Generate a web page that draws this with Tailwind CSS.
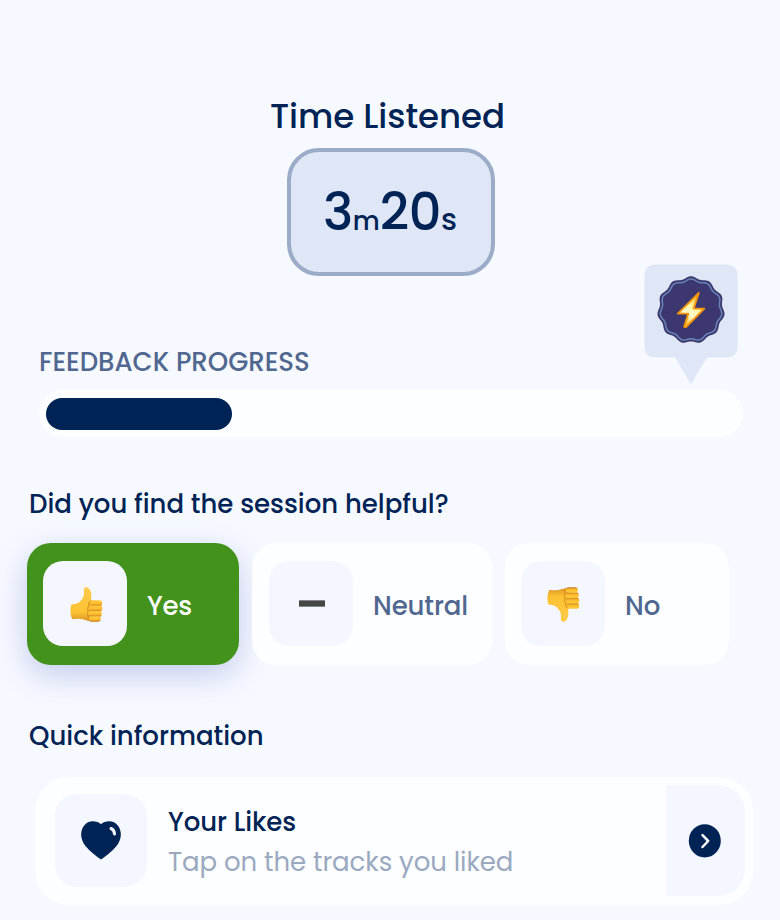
<!DOCTYPE html>
<html lang="en">
<head>
<meta charset="utf-8">
<title>Session feedback</title>
<script src="https://cdn.jsdelivr.net/npm/@tailwindcss/browser@4"></script>
</head>
<body class="bg-[#f6f9ff]">
<main class="relative w-[780px] h-[920px] overflow-hidden bg-[#f6f9ff] font-[Poppins,Inter,sans-serif] font-medium text-[#002355] whitespace-nowrap">
  <header class="flex flex-col items-center pt-[96px]">
    <h1 class="h-[40px] leading-[40px] text-[34px] mr-[5px]">Time Listened</h1>
    <div class="mt-[12px] ml-[2px] w-[208px] h-[128px] rounded-[32px] border-4 border-[#9bacc8] bg-[#dfe6f5] flex items-baseline justify-center pt-[30px] pr-[2px] leading-[60px] text-[51px]">
      <span class="tracking-[-0.5px]">3</span><span class="text-[26px]">m</span><span class="tracking-[-0.5px]">20</span><span class="text-[30px]">s</span>
    </div>
  </header>

  <section class="pt-[70px] pl-[39px]">
    <h2 class="h-[32px] leading-[32px] text-[26px] text-[#50678f]">FEEDBACK PROGRESS</h2>
    <div class="mt-[12px] w-[704px] h-[47px] rounded-full bg-[#fdfeff] pt-[8px] pl-[7px]">
      <div class="w-[186px] h-[32px] rounded-full bg-[#002355]"></div>
    </div>
  </section>

  <div class="absolute left-[644px] top-[264px] w-[94px] h-[121px]">
    <svg class="block" width="94" height="121" viewBox="0 0 94 121">
      <defs>
        <linearGradient id="bolt" x1="0.7" y1="0" x2="0.3" y2="1"><stop offset="0" stop-color="#ffae12"/><stop offset=".38" stop-color="#fff3a0"/><stop offset=".65" stop-color="#fffbd0"/><stop offset="1" stop-color="#ffb010"/></linearGradient>
      </defs>
      <path d="M12 .5H82Q93.500 .5 93.500 12V82Q93.500 93.500 82 93.500H63L47 120 31 93.500H12Q.5 93.500 .5 82V12Q.5 .5 12 .5Z" fill="#dfe6f5"/>
      <path id="seal" fill="#3c376f"/>
      <path id="ring" fill="none" stroke="#6681b3" stroke-width="1.600"/>
      <path d="M54.800 28.500 33.800 49.300H44.300L40.200 62.500 42 62.700 60.300 44.300H49.600Z" transform="translate(0 .3)" fill="url(#bolt)" stroke="#f8960a" stroke-width="1.900" stroke-linejoin="round"/>
    </svg>
  </div>

  <section class="pt-[50px] pl-[27px]">
    <h2 class="h-[34px] leading-[34px] pl-[2px] text-[26px]">Did you find the session helpful?</h2>
    <div class="mt-[22px] flex gap-[13px] text-[26px] text-[#50678f]">
      <div class="w-[212px] h-[121.500px] rounded-[24px] bg-[#42921b] text-white flex items-start pt-[18px] pl-[16px] gap-[20px] shadow-[0_10px_32px_rgba(70,85,190,0.28)]">
        <div class="w-[84px] h-[85px] rounded-[20px] bg-[#f4f7ff] flex items-center justify-center">
          <svg class="ml-[3px] mt-[2px]" width="36" height="36" viewBox="0 0 36 36"><use href="#thumb"/></svg>
        </div><span class="leading-[91px] tracking-[-0.2px]">Yes</span>
      </div>
      <div class="w-[240px] h-[121.500px] rounded-[24px] bg-[#fdfeff] flex items-start pt-[18px] pl-[17px] gap-[20px]">
        <div class="w-[84px] h-[85px] rounded-[20px] bg-[#f4f7ff] flex items-center justify-center">
          <div class="w-[26px] h-[7px] ml-[1px] bg-[#454545] border-y border-[#85868a]"></div>
        </div><span class="leading-[91px] tracking-[-0.1px]">Neutral</span>
      </div>
      <div class="w-[224px] h-[121.500px] rounded-[24px] bg-[#fdfeff] flex items-start pt-[18px] pl-[16px] gap-[20px]">
        <div class="w-[84px] h-[85px] rounded-[20px] bg-[#f4f7ff] flex items-center justify-center">
          <svg class="ml-[2px]" width="36" height="36" viewBox="0 0 36 36"><use href="#thumb" transform="translate(0 36) scale(1 -1)"/></svg>
        </div><span class="leading-[91px]">No</span>
      </div>
    </div>
  </section>

  <section class="pt-[54.500px] pl-[29px]">
    <h2 class="h-[34px] leading-[34px] text-[26px]">Quick information</h2>
    <div class="mt-[24px] ml-[6px] w-[718px] h-[128px] rounded-[34px] bg-[#fdfeff] flex items-start pl-[20px] pr-[8.500px]">
      <div class="mt-[17px] w-[92px] h-[93px] rounded-[22px] bg-[#f4f7ff] flex items-center justify-center">
        <svg width="42" height="42" viewBox="0 0 42 42"><path d="M21 4.200C26 .2 34 .2 38 5.800 42.800 12.500 41 20.500 36.500 26 32 31.500 26 36 21 39.500 16 36 10 31.500 5.500 26 1 20.500 -.8 12.500 4 5.800 8 .2 16 .2 21 4.200Z" fill="#002355"/><path d="M31 8.500Q34.300 9.700 34.500 14" fill="none" stroke="#f4f7ff" stroke-width="3" stroke-linecap="round"/></svg>
      </div>
      <div class="mt-[25px] ml-[21px] flex-1 text-[26px] leading-[40px]">
        <div class="tracking-[-0.05px]">Your Likes</div>
        <div class="font-normal text-[#9ba9c0] tracking-[-0.05px]">Tap on the tracks you liked</div>
      </div>
      <div class="mt-[8px] w-[79px] h-[111px] rounded-r-[27px] bg-[#f4f7ff] flex items-center justify-center">
        <svg width="34" height="34" viewBox="0 0 34 34"><ellipse cx="16.800" cy="16.800" rx="16" ry="16.600" fill="#002355"/><path d="M14.500 11.200 20.200 17 14.500 23" fill="none" stroke="#f8faff" stroke-width="2.500" stroke-linecap="round" stroke-linejoin="round"/></svg>
      </div>
    </div>
  </section>

  <svg class="absolute" width="0" height="0">
    <defs>
      <linearGradient id="skin" x1="0" y1="0" x2="0" y2="1"><stop offset="0" stop-color="#ffcb4a"/><stop offset=".75" stop-color="#fdc232"/><stop offset="1" stop-color="#dc9426"/></linearGradient>
      <linearGradient id="finger" x1="0" y1="0" x2="0" y2="1"><stop offset="0" stop-color="#ffcb3c"/><stop offset=".6" stop-color="#fcba2c"/><stop offset="1" stop-color="#c4761c"/></linearGradient>
      <g id="thumb">
        <path d="M2.500 17.500C5 17.300 8.500 17 11 14.500 14 11.500 15 9 15 5.500 14 1.500 16 -.3 18 .3 21 1.200 22.500 5.500 22.300 9 22.300 11 22.300 12.500 22 14H27V33.500Q20 34.400 16 33 10 31 4 32.300C1 30.500 .8 20 2.500 17.500Z" fill="url(#skin)"/>
        <rect x="20" y="13.200" width="13.200" height="5.900" rx="2.900" fill="url(#finger)"/>
        <rect x="19.300" y="18.600" width="14" height="5.900" rx="2.900" fill="url(#finger)"/>
        <rect x="19.300" y="24" width="13.500" height="5.700" rx="2.800" fill="url(#finger)"/>
        <rect x="19.600" y="29.300" width="12.200" height="5.400" rx="2.600" fill="url(#finger)"/>
        <path d="M21.800 13.500Q18.800 15.500 19.600 19 18 21 19 24 18 27 19.200 29.500 18.500 31.500 20 33.500" fill="none" stroke="#d0851c" stroke-width=".9"/>
      </g>
    </defs>
  </svg>
</main>
<script>
  // Scalloped outline with 11 lobes, the first one pointing up.
  function scallop(radius, depth) {
    let d = '';
    for (let i = 0; i < 220; i++) {
      const a = i / 220 * Math.PI * 2;
      const r = radius + depth * Math.cos(11 * a);
      d += (i ? 'L' : 'M') + (47 + r * Math.sin(a)).toFixed(2) + ' ' + (46 - r * Math.cos(a)).toFixed(2);
    }
    return d + 'Z';
  }
  document.getElementById('seal').setAttribute('d', scallop(32.6, 1.2));
  document.getElementById('ring').setAttribute('d', scallop(29.9, 1.1));
</script>
</body>
</html>
